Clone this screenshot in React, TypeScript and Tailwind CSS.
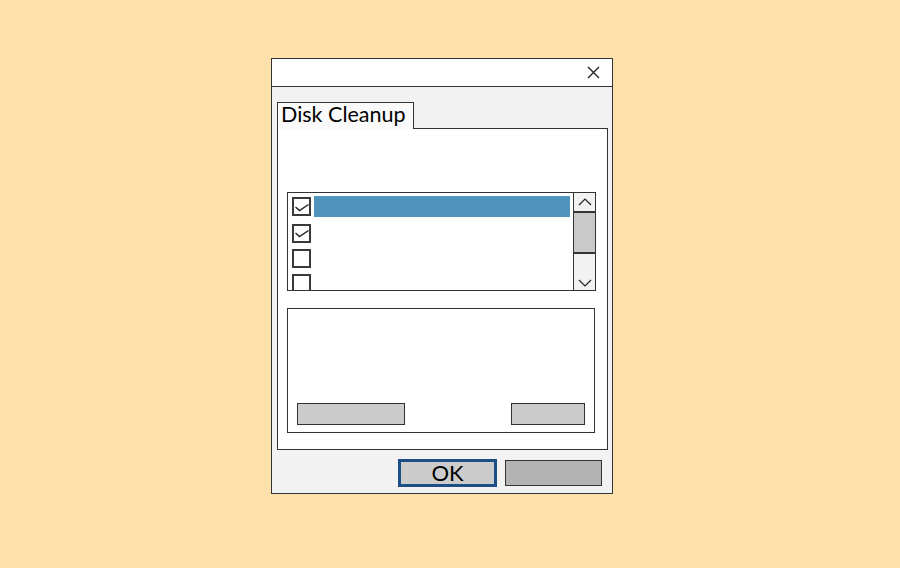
import { useState } from 'react'

const items = [
  { id: 1, checked: true },
  { id: 2, checked: true },
  { id: 3, checked: false },
  { id: 4, checked: false },
]

function CheckMark() {
  return (
    <svg width="14" height="10" viewBox="0 0 14 10" fill="none" stroke="#222" strokeWidth="1.4">
      <path d="M0.5 5 L4.5 8.5 L13.5 2.5" />
    </svg>
  )
}

function Chevron({ up }: { up?: boolean }) {
  return (
    <svg width="14" height="8" viewBox="0 0 14 8" fill="none" stroke="#222" strokeWidth="1.2">
      {up ? <path d="M1 7 L7 1 L13 7" /> : <path d="M1 1 L7 7 L13 1" />}
    </svg>
  )
}

export default function App() {
  const [checks] = useState(items)

  return (
    <div className="min-h-screen w-full bg-[#fde1ab] pl-[271px] pt-[58px] font-['Lato','Liberation_Sans',sans-serif]">
      {/* dialog window */}
      <div className="w-[342px] h-[436px] border border-[#333] bg-[#f2f2f2] flex flex-col">
        <div className="h-[28px] shrink-0 border-b border-[#333] bg-white flex items-center justify-end pr-[12px]">
          <svg width="13" height="13" viewBox="0 0 13 13" stroke="#222" strokeWidth="1.4">
            <path d="M1 1 L12 12 M12 1 L1 12" />
          </svg>
        </div>

        <div className="px-[5px] pt-[15px]">
          {/* tab header */}
          <div className="relative z-10 -mb-px w-[137px] h-[27px] border border-b-0 border-[#333] bg-[#fafafa] pl-[3px] flex items-center">
            <span className="text-[21.5px] leading-none text-black -mt-[2px]">Disk Cleanup</span>
          </div>

          {/* tab panel */}
          <div className="w-[331px] h-[322px] border border-[#333] bg-white pl-[9px] pt-[63px]">
            <div className="w-[309px] h-[99px] border border-[#333] flex overflow-hidden">
              <div className="flex-1 flex flex-col gap-[7px] pl-[4px] pt-[3px]">
                {checks.map((c, i) => (
                  <div key={c.id} className={`flex items-center gap-[3px] shrink-0 ${i === 0 ? 'h-[21px]' : 'h-[18px]'}`}>
                    <div className="w-[19px] h-[19px] shrink-0 border-2 border-[#3a3a3a] bg-white flex items-center justify-center">
                      {c.checked && <CheckMark />}
                    </div>
                    {i === 0 && <div className="flex-1 h-[21px] mr-[3px] bg-[#4f94bd]" />}
                  </div>
                ))}
              </div>
              {/* scrollbar */}
              <div className="w-[22px] shrink-0 border-l border-[#333] bg-[#f2f2f2] flex flex-col">
                <div className="h-[18px] flex items-center justify-center">
                  <Chevron up />
                </div>
                <div className="h-[43px] border-y-2 border-[#333] bg-[#c9c9c9]" />
                <div className="flex-1 flex items-end justify-center pb-[3px]">
                  <Chevron />
                </div>
              </div>
            </div>

            <div className="mt-[17px] w-[308px] h-[125px] border border-[#333] flex items-end justify-between px-[9px] pb-[7px]">
              <div className="w-[108px] h-[22px] border border-[#333] bg-[#cccccc]" />
              <div className="w-[74px] h-[22px] border border-[#333] bg-[#cccccc]" />
            </div>
          </div>

          {/* footer buttons */}
          <div className="mt-[9px] flex justify-end items-center gap-[8px] pr-[5px]">
            <button className="w-[99px] h-[28px] border-[3px] border-[#1d4f86] bg-[#cccccc] flex items-center justify-center text-[22px] leading-none text-black">
              OK
            </button>
            <div className="w-[97px] h-[26px] border border-[#333] bg-[#b3b3b3]" />
          </div>
        </div>
      </div>
    </div>
  )
}
